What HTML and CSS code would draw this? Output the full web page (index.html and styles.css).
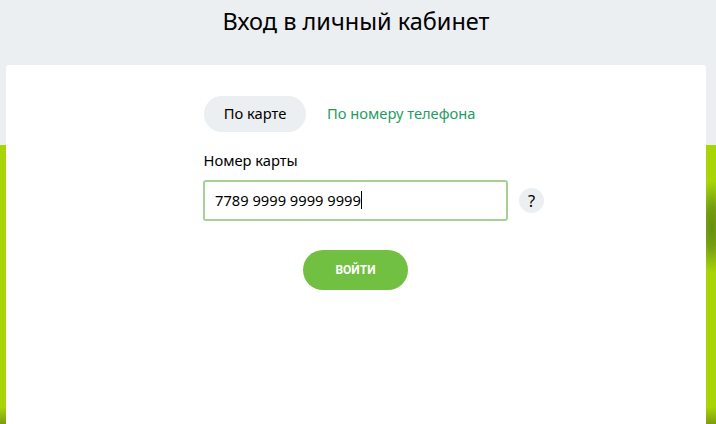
FILE: index.html
```html
<!DOCTYPE html>
<html lang="ru">
<head>
<meta charset="utf-8">
<title>Вход в личный кабинет</title>
<link rel="stylesheet" href="styles.css">
</head>
<body>
<div class="page">
  <div class="backdrop">
    <div class="backdrop-top"></div>
    <div class="backdrop-green"></div>
  </div>
  <h1 class="title">Вход в личный кабинет</h1>
  <main class="card">
    <form class="form">
      <div class="tabs">
        <span class="tab tab-active">По карте</span>
        <span class="tab tab-link">По номеру телефона</span>
      </div>
      <div class="label">Номер карты</div>
      <div class="field-row">
        <div class="input"><span>7789 9999 9999 9999</span><i class="caret"></i></div>
        <span class="help">?</span>
      </div>
      <div class="actions"><span class="btn">ВОЙТИ</span></div>
    </form>
  </main>
</div>
</body>
</html>
```
FILE: styles.css
```css
* { box-sizing: border-box; }
html, body { margin: 0; height: 100%; overflow: hidden; }
body { font-family: "Noto Sans", "Open Sans", sans-serif; color: #000; }
.page { position: relative; width: 716px; height: 424px; overflow: hidden; }
.backdrop { position: absolute; inset: 0; display: flex; flex-direction: column; }
.backdrop-top { height: 145px; background: #ebeff1; }
.backdrop-green {
  flex: 1;
  background:
    radial-gradient(ellipse 16px 46px at 712px 82px, #668f10 0, #76a012 45%, rgba(165,212,8,0) 100%),
    linear-gradient(to bottom, rgba(165,212,8,0) 262px, #7d9c12 279px),
    #a8d408;
}
.title { position: relative; margin: 0; width: 712px; height: 65px; padding-top: 4px; text-align: center; font-size: 23.5px; line-height: 34px; font-weight: 400; }
.card { position: relative; margin: 0 10px 0 6px; height: 359px; background: #fff; border-radius: 3px 3px 0 0; padding-top: 31px; }
.form { margin-left: 197px; width: 345px; }
.tabs { display: flex; align-items: center; gap: 21px; }
.tab { font-size: 14.7px; line-height: 34px; padding-bottom: 2px; }
.tab-active { width: 102px; margin-left: 1px; text-align: center; background: #ebeff1; border-radius: 18px; }
.tab-link { color: #1f9c63; }
.label { margin-top: 18px; font-size: 14.7px; line-height: 20px; padding-left: 0.5px; }
.field-row { display: flex; align-items: center; gap: 11px; margin-top: 10px; }
.input { display: flex; align-items: center; width: 305px; height: 41px; padding: 0 0 2px 10px; border: 2px solid #a5d195; border-radius: 3px; font-size: 14.7px; }
.caret { width: 1px; height: 18px; background: #000; }
.help { width: 25px; height: 25px; border-radius: 50%; background: #ebeff1; text-align: center; font-size: 16.5px; line-height: 25px; }
.actions { margin-top: 29px; width: 305px; display: flex; justify-content: center; }
.btn { width: 105px; height: 40px; border-radius: 20px; background: #72c041; color: #fff; text-align: center; font-family: Roboto, sans-serif; font-weight: 700; font-size: 12px; line-height: 40px; }
```
